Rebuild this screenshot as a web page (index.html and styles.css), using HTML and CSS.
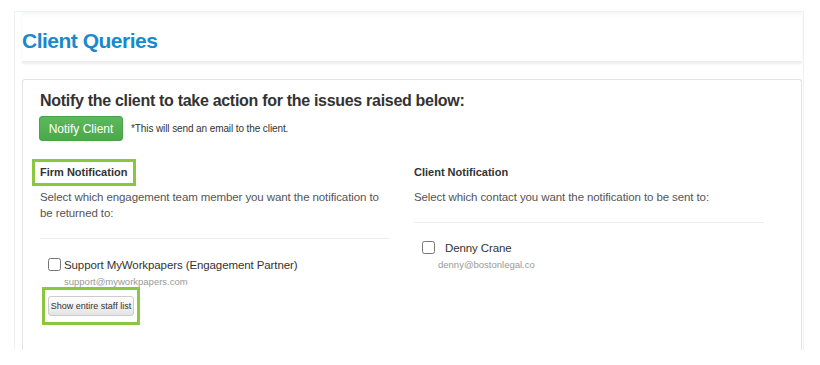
FILE: index.html
```html
<!DOCTYPE html>
<html lang="en">
<head>
    <meta charset="UTF-8">
    <title>Client Queries</title>
    <link rel="stylesheet" href="styles.css">
</head>
<body>
    <div class="page">
        <div class="page-header">
            <h1>Client Queries</h1>
        </div>

        <div class="panel">
            <h2>Notify the client to take action for the issues raised below:</h2>
            <div class="notify-row">
                <button class="btn-notify">Notify Client</button>
                <span class="note">*This will send an email to the client.</span>
            </div>

            <div class="columns">
                <div class="col">
                    <h4 class="col-title highlight">Firm Notification</h4>
                    <p class="col-desc">Select which engagement team member you want the notification to be returned to:</p>
                    <hr>
                    <div class="contact">
                        <label><input type="checkbox"> Support MyWorkpapers (Engagement Partner)</label>
                        <div class="email">support@myworkpapers.com</div>
                    </div>
                    <div class="staff-wrap highlight">
                        <button class="btn-staff">Show entire staff list</button>
                    </div>
                </div>
                <div class="col">
                    <h4 class="col-title">Client Notification</h4>
                    <p class="col-desc">Select which contact you want the notification to be sent to:</p>
                    <hr>
                    <div class="contact client">
                        <label><input type="checkbox"> Denny Crane</label>
                        <div class="email">denny@bostonlegal.co</div>
                    </div>
                </div>
            </div>
        </div>
    </div>
</body>
</html>
```

FILE: styles.css
```css
* { box-sizing: border-box; }
body {
    margin: 0;
    font-family: "Liberation Sans", Arial, sans-serif;
    background-color: #ffffff;
    color: #333;
}
.page {
    margin: 11px 0 0 14px;
    width: 790px;
    height: 339px;
    border: 1px solid #eef1f4;
    border-bottom: none;
    padding: 0 1px 0 7px;
}
.page-header {
    height: 50px;
    background: linear-gradient(#f6f7f8, #ffffff 6px);
    box-shadow: 0 2px 2px rgba(0,0,0,0.07);
    border-bottom: 1px solid #ececec;
    padding-top: 17px;
}
.page-header h1 {
    margin: 0;
    font-size: 21px;
    line-height: 24px;
    color: #1a88cc;
    font-weight: bold;
    letter-spacing: -0.5px;
}
.panel {
    margin-top: 17px;
    height: 271px;
    border: 1px solid #e3e3e3;
    border-bottom: none;
    border-radius: 3px 3px 0 0;
    padding: 10px 17px 0 17px;
}
.panel h2 {
    margin: 0;
    font-size: 16px;
    line-height: 22px;
    font-weight: bold;
    color: #333;
    letter-spacing: -0.3px;
}
.notify-row {
    display: flex;
    align-items: center;
    gap: 8px;
    margin-top: 4px;
}
.btn-notify {
    font-family: inherit;
    font-size: 12px;
    color: #fff;
    background: linear-gradient(#5cb85c, #4aa84a);
    border: 1px solid #47a447;
    border-radius: 3px;
    width: 84px;
    height: 25px;
    padding: 0;
    margin-left: -1px;
}
.note {
    font-size: 10px;
    color: #333;
    letter-spacing: -0.1px;
}
.columns {
    display: grid;
    grid-template-columns: 350px 350px;
    gap: 24px;
    margin-top: 18px;
}
.col-title {
    margin: 0;
    font-size: 11px;
    line-height: 17px;
    font-weight: bold;
    color: #333;
    display: inline-block;
}
.col-title.highlight {
    margin-left: -8px;
    padding: 2px 6px 2px 5px;
    outline: 3px solid #8cc63f;
    outline-offset: -3px;
    border: 3px solid transparent;
}
.col > .col-title:not(.highlight) {
    padding-top: 5px;
    padding-bottom: 5px;
}
.col-desc {
    margin: 3px 0 0;
    font-size: 11.5px;
    line-height: 16px;
    color: #555;
    letter-spacing: -0.1px;
}
.col hr {
    border: none;
    border-top: 1px solid #eee;
    margin: 17px 0 0;
}
.contact {
    padding: 19px 0 0 8px;
}
.contact label {
    font-size: 11.5px;
    color: #333;
    display: flex;
    align-items: center;
    gap: 3px;
    letter-spacing: -0.1px;
}
.contact input {
    margin: 0;
    width: 13px;
    height: 13px;
}
.contact .email {
    font-size: 9.5px;
    color: #999;
    margin: 5px 0 0 16px;
}
.contact.client {
    padding-top: 18px;
}
.contact.client label {
    gap: 10px;
}
.contact.client .email {
    margin-left: 16px;
}
.staff-wrap.highlight {
    display: inline-block;
    margin: 0 0 0 2px;
    padding: 5px 3px 6px 3px;
    border: 3px solid #8cc63f;
}
.btn-staff {
    font-family: inherit;
    font-size: 9px;
    color: #333;
    background: linear-gradient(#ffffff, #e4e4e4);
    border: 1px solid #ccc;
    border-radius: 3px;
    height: 20px;
    width: 86px;
    padding: 0;
}
```
